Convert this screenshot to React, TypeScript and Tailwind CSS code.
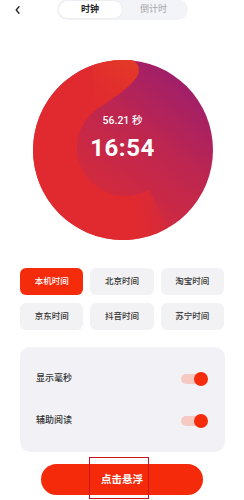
import { useState } from 'react';

const ZONES = ['本机时间', '北京时间', '淘宝时间', '京东时间', '抖音时间', '苏宁时间'];
const FONT = "font-['Roboto','Noto_Sans_CJK_SC',sans-serif]";

function ClockDial() {
  return (
    <div className="relative w-[180px] h-[180px]">
      <svg viewBox="0 0 180 180" className="absolute inset-0 w-full h-full" aria-hidden="true">
        <defs>
          <linearGradient id="dialBg" gradientUnits="userSpaceOnUse" x1="175" y1="10" x2="55" y2="165">
            <stop offset="0" stopColor="#951c73" />
            <stop offset="0.45" stopColor="#bd2650" />
            <stop offset="1" stopColor="#dc2c35" />
          </linearGradient>
          <linearGradient id="dialBand" gradientUnits="userSpaceOnUse" x1="98" y1="0" x2="150" y2="0">
            <stop offset="0" stopColor="#e12a2f" stopOpacity="1" />
            <stop offset="1" stopColor="#e12a2f" stopOpacity="0" />
          </linearGradient>
          <linearGradient id="dialTail" gradientUnits="userSpaceOnUse" x1="60" y1="60" x2="105" y2="5">
            <stop offset="0" stopColor="#e12a2f" stopOpacity="0" />
            <stop offset="1" stopColor="#e43a27" stopOpacity="1" />
          </linearGradient>
        </defs>
        <circle cx="90" cy="90" r="90" fill="url(#dialBg)" />
        <path
          d="M100 0.6 A90 90 0 1 0 135 168 L116 129.6 A48 48 0 1 1 68 46.4 C80 38 95 29 103 18 C108 11 106 4 100 0.6 Z"
          fill="url(#dialBand)"
        />
        <path d="M68 46.4 C80 38 95 29 103 18 C108 11 106 4 100 0.6 A90 90 0 0 0 60 5 L60 46 Z" fill="url(#dialTail)" />
      </svg>
      <div className="relative h-full flex flex-col items-center justify-center pb-[24px] text-white">
        <span className="text-[10.5px] font-medium leading-none">56.21 秒</span>
        <span className="mt-[9px] text-[24px] font-bold leading-none tracking-[0.5px]">16:54</span>
      </div>
    </div>
  );
}

function Toggle({ on }: { on: boolean }) {
  return (
    <div className="relative w-[27px] h-[14px]">
      <div className={`absolute left-0 right-[2px] top-[2px] h-[10px] rounded-full ${on ? 'bg-[#f6c9c2]' : 'bg-[#dcdde1]'}`} />
      <div className={`absolute top-0 w-[14px] h-[14px] rounded-full ${on ? 'right-0 bg-[#f42c0b]' : 'left-0 bg-white'}`} />
    </div>
  );
}

export default function App() {
  const [zone, setZone] = useState(0);
  const [showMs, setShowMs] = useState(true);
  const [assist, setAssist] = useState(true);

  return (
    <div className={`relative w-[244px] h-[500px] overflow-hidden bg-white ${FONT}`}>
      <div className="relative h-[20px] flex justify-center">
        <svg className="absolute left-[15px] top-[6px]" width="5" height="8" viewBox="0 0 5 8" aria-hidden="true">
          <path d="M4 0.8 L1.2 4 L4 7.2" fill="none" stroke="#222" strokeWidth="1.3" strokeLinecap="round" strokeLinejoin="round" />
        </svg>
        <div className="-mt-[1px] w-[131px] h-[21px] rounded-full bg-[#f3f4f7] p-[2px] flex">
          <div className="w-[63px] h-full rounded-full bg-white shadow-[0_0_3px_rgba(0,0,0,0.06)] flex items-center justify-center text-[9px] font-bold text-[#222]">
            时钟
          </div>
          <div className="flex-1 flex items-center justify-center text-[9px] text-[#a3a5ab]">倒计时</div>
        </div>
      </div>

      <div className="mt-[40px] flex justify-center pl-[1px]">
        <ClockDial />
      </div>

      <div className="mt-[28px] mx-[20px] grid grid-cols-3 gap-x-[7px] gap-y-[8px]">
        {ZONES.map((z, i) => (
          <button
            key={z}
            onClick={() => setZone(i)}
            className={`h-[27px] rounded-[6px] text-[8.5px] font-medium ${
              zone === i ? 'bg-[#f42c0b] text-white' : 'bg-[#f2f2f4] text-[#333]'
            }`}
          >
            {z}
          </button>
        ))}
      </div>

      <div className="mt-[17px] mx-[19.5px] rounded-[10px] bg-[#f2f2f6] px-[16.5px] pt-[11px] pb-[10px]">
        <div className="h-[42px] flex items-center justify-between" onClick={() => setShowMs(!showMs)}>
          <span className="text-[9px] font-medium text-[#333]">显示毫秒</span>
          <Toggle on={showMs} />
        </div>
        <div className="h-[42px] flex items-center justify-between" onClick={() => setAssist(!assist)}>
          <span className="text-[9px] font-medium text-[#333]">辅助阅读</span>
          <Toggle on={assist} />
        </div>
      </div>

      <div className="mt-[12px] flex justify-center">
        <button className="w-[162px] h-[31px] rounded-full bg-[#f42a0a] text-white text-[10.5px] font-bold">点击悬浮</button>
      </div>

      <div className="absolute left-[89px] top-[457px] w-[60px] h-[42px] border-[1.5px] border-[#c8141c]" />
    </div>
  );
}
